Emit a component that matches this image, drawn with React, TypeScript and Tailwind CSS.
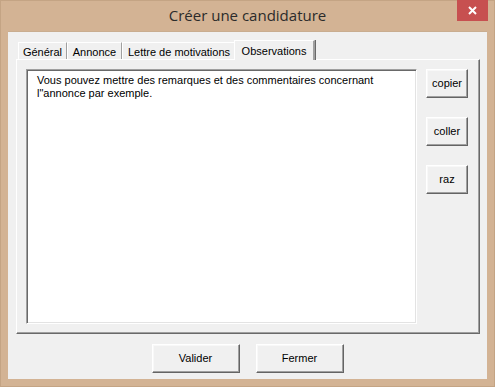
import React from "react";

const btn =
  "flex items-center justify-center bg-[#f0f0f0] border border-t-white border-l-white border-b-[#646464] border-r-[#646464] shadow-[inset_-1px_-1px_0_#a0a0a0,inset_1px_1px_0_#f8f8f8] text-[11px] text-black";

function Tab({ label, width, active }: { label: string; width: number; active?: boolean }) {
  if (active) {
    return (
      <div
        className="relative z-10 -mb-px -ml-[2px] h-[20px] flex items-start justify-center pt-[2px] bg-[#f0f0f0] border-t border-l border-t-white border-l-white border-r-2 border-r-[#a0a0a0] shadow-[1px_0_0_#696969]"
        style={{ width }}
      >
        {label}
      </div>
    );
  }
  return (
    <div
      className="h-[17px] flex items-start justify-center pt-[1px] bg-[#f0f0f0] border-t border-l border-t-white border-l-white border-r border-r-[#a0a0a0] shadow-[1px_0_0_#696969]"
      style={{ width }}
    >
      {label}
    </div>
  );
}

export default function App() {
  return (
    <div className="w-[495px] h-[387px] bg-[#d3b394] border border-[#c4a484] flex flex-col font-['Liberation_Sans',Arial,sans-serif]">
      <div className="relative h-[30px] flex items-center justify-center">
        <span className="font-['Open_Sans','Noto_Sans',sans-serif] text-[15px] text-[#2b2b2b] mt-[-1px]">
          Créer une candidature
        </span>
        <div className="absolute right-[6px] top-[-1px] w-[31px] h-[21px] bg-[#c75050] flex items-center justify-center">
          <svg width="9" height="9" viewBox="0 0 9 9">
            <path d="M1 1L8 8M8 1L1 8" stroke="white" strokeWidth="2" />
          </svg>
        </div>
      </div>
      <div className="mx-[7px] w-[479px] h-[348px] bg-[#f0f0f0] border-t border-[#c9ad90] flex flex-col px-[8px] pt-[9px]">
        <div className="flex items-end pl-[2px] text-[11px] text-black h-[18px]">
          <Tab label="Général" width={49} />
          <Tab label="Annonce" width={55} />
          <Tab label="Lettre de motivations" width={114} />
          <Tab label="Observations" width={81} active />
        </div>
        <div className="w-[464px] h-[275px] border border-t-white border-l-white border-b-[#696969] border-r-[#696969] shadow-[inset_-1px_-1px_0_#a0a0a0] flex gap-[9px] p-[9px]">
          <div className="w-[391px] h-[255px] bg-white border border-t-[#a0a0a0] border-l-[#a0a0a0] border-b-white border-r-white shadow-[inset_1px_1px_0_#696969,inset_-1px_-1px_0_#e3e3e3] pl-[10px] pt-[4px] text-[11px] leading-[13px] text-black">
            Vous pouvez mettre des remarques et des commentaires concernant
            <br />
            l"annonce par exemple.
          </div>
          <div className="flex flex-col gap-[19px]">
            <div className={`${btn} w-[42px] h-[29px]`}>copier</div>
            <div className={`${btn} w-[42px] h-[29px]`}>coller</div>
            <div className={`${btn} w-[42px] h-[29px]`}>raz</div>
          </div>
        </div>
        <div className="flex justify-center gap-[16px] mt-[10px]">
          <div className={`${btn} w-[88px] h-[29px]`}>Valider</div>
          <div className={`${btn} w-[88px] h-[29px]`}>Fermer</div>
        </div>
      </div>
    </div>
  );
}
